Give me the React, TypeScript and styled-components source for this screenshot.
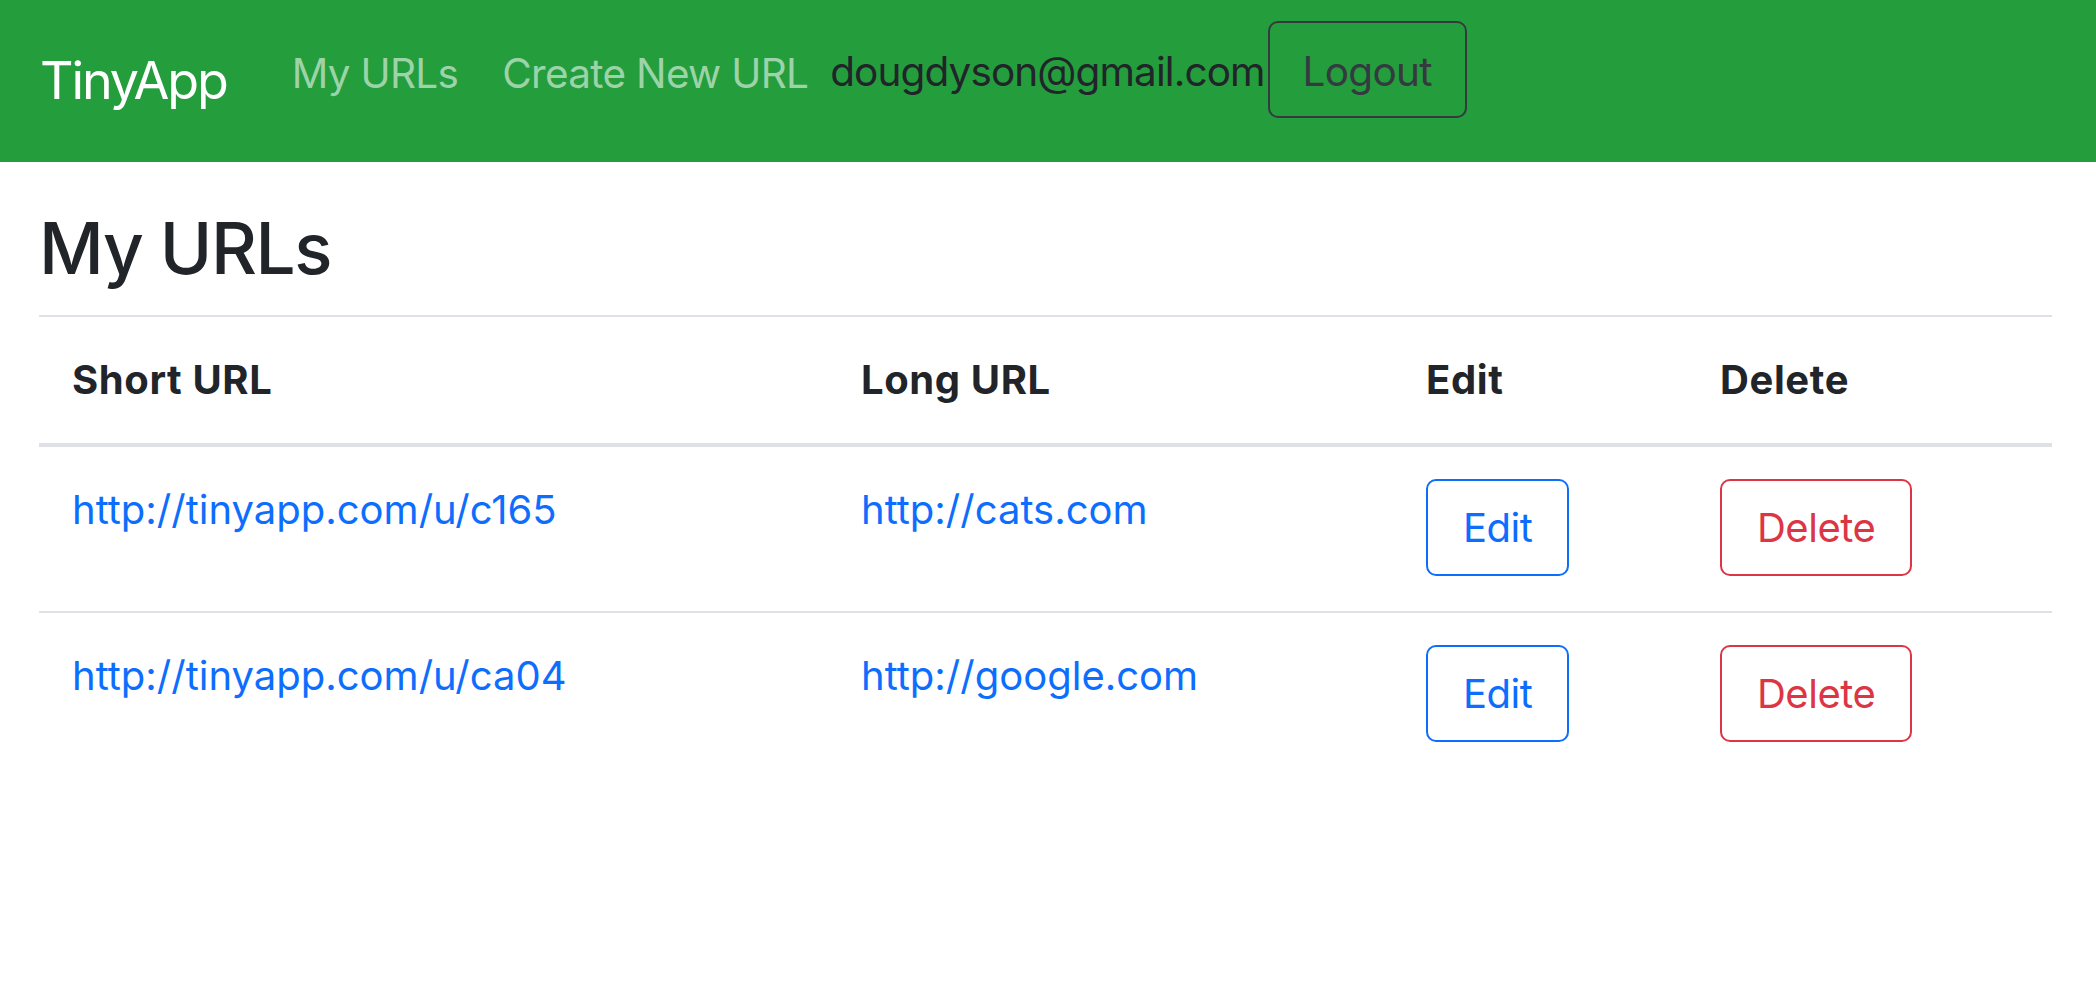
import React from "react";
import styled, { createGlobalStyle } from "styled-components";

const GlobalStyle = createGlobalStyle`
  * { box-sizing: border-box; }
  html, body { margin: 0; padding: 0; background: #ffffff; }
  body {
    font-family: Inter, "Noto Sans", "Liberation Sans", sans-serif;
    font-size: 40px;
    line-height: 1.5;
    color: #212529;
  }
`;

const Navbar = styled.nav`
  display: flex;
  align-items: center;
  height: 162px;
  padding-left: 40px;
  background: #249d3d;
`;

const Brand = styled.a`
  font-size: 52px;
  line-height: 76px;
  letter-spacing: -2.1px;
  color: #ffffff;
  text-decoration: none;
  margin-right: 65px;
`;

const NavGroup = styled.div`
  display: flex;
  align-items: center;
  margin-bottom: 24px;
`;

const NavLink = styled.a`
  font-size: 40.5px;
  line-height: 62px;
  letter-spacing: -0.7px;
  padding-top: 10px;
  color: #9dd3a8;
  text-decoration: none;
  margin-right: 44px;
`;

const UserEmail = styled.span`
  font-size: 40.5px;
  line-height: 62px;
  letter-spacing: -0.9px;
  padding-top: 5px;
  color: #212529;
  margin-left: -22px;
`;

const LogoutButton = styled.button`
  font-family: inherit;
  font-size: 40.5px;
  line-height: 62px;
  letter-spacing: -0.7px;
  color: #343a40;
  background: transparent;
  border: 2px solid #343a40;
  border-radius: 10px;
  height: 97px;
  width: 199px;
  padding: 5px 0 0;
  margin-left: 3px;
`;

const Main = styled.main`
  padding: 0 44px 0 39px;
`;

const Heading = styled.h1`
  margin: 44px 0 24px;
  font-size: 71px;
  font-weight: 500;
  line-height: 1.2;
  letter-spacing: -1.4px;
  color: #212529;
`;

const Table = styled.table`
  width: 100%;
  border-collapse: collapse;
  table-layout: fixed;
`;

const HeadCell = styled.th<{ $w: number }>`
  width: ${(p) => p.$w}px;
  text-align: left;
  font-weight: 700;
  font-size: 40px;
  line-height: 60px;
  letter-spacing: 0.6px;
  padding: 33px;
  border-top: 2px solid #dee2e6;
  border-bottom: 4px solid #dee2e6;
  vertical-align: bottom;
`;

const Row = styled.tr<{ $first?: boolean }>`
  & > td {
    border-top: ${(p) => (p.$first ? "0" : "2px solid #dee2e6")};
  }
`;

const Cell = styled.td`
  padding: 33px;
  vertical-align: top;
  font-size: 40px;
  line-height: 60px;
`;

const ActionCell = styled(Cell)`
  padding: 32px 33px 35px;
`;

const UrlLink = styled.a`
  color: #0d6efd;
  text-decoration: none;
`;

const OutlineButton = styled.button<{ $tone: "primary" | "danger" }>`
  font-family: inherit;
  font-size: 40px;
  line-height: 60px;
  letter-spacing: -0.5px;
  height: 97px;
  padding: 0 35px;
  background: transparent;
  border-radius: 10px;
  border: 2px solid ${(p) => (p.$tone === "primary" ? "#0d6efd" : "#dc3545")};
  color: ${(p) => (p.$tone === "primary" ? "#0d6efd" : "#dc3545")};
`;

const urls = [
  { short: "c165", long: "http://cats.com" },
  { short: "ca04", long: "http://google.com" },
];

export default function App() {
  return (
    <>
      <GlobalStyle />
      <Navbar>
        <Brand href="#">TinyApp</Brand>
        <NavGroup>
          <NavLink href="#">My URLs</NavLink>
          <NavLink href="#">Create New URL</NavLink>
          <UserEmail>dougdyson@gmail.com</UserEmail>
          <LogoutButton>Logout</LogoutButton>
        </NavGroup>
      </Navbar>
      <Main>
        <Heading>My URLs</Heading>
        <Table>
          <thead>
            <tr>
              <HeadCell $w={789}>Short URL</HeadCell>
              <HeadCell $w={565}>Long URL</HeadCell>
              <HeadCell $w={294}>Edit</HeadCell>
              <HeadCell $w={365}>Delete</HeadCell>
            </tr>
          </thead>
          <tbody>
            {urls.map((u, i) => (
              <Row key={u.short} $first={i === 0}>
                <Cell>
                  <UrlLink href="#">http://tinyapp.com/u/{u.short}</UrlLink>
                </Cell>
                <Cell>
                  <UrlLink href="#">{u.long}</UrlLink>
                </Cell>
                <ActionCell>
                  <OutlineButton $tone="primary">Edit</OutlineButton>
                </ActionCell>
                <ActionCell>
                  <OutlineButton $tone="danger">Delete</OutlineButton>
                </ActionCell>
              </Row>
            ))}
          </tbody>
        </Table>
      </Main>
    </>
  );
}
